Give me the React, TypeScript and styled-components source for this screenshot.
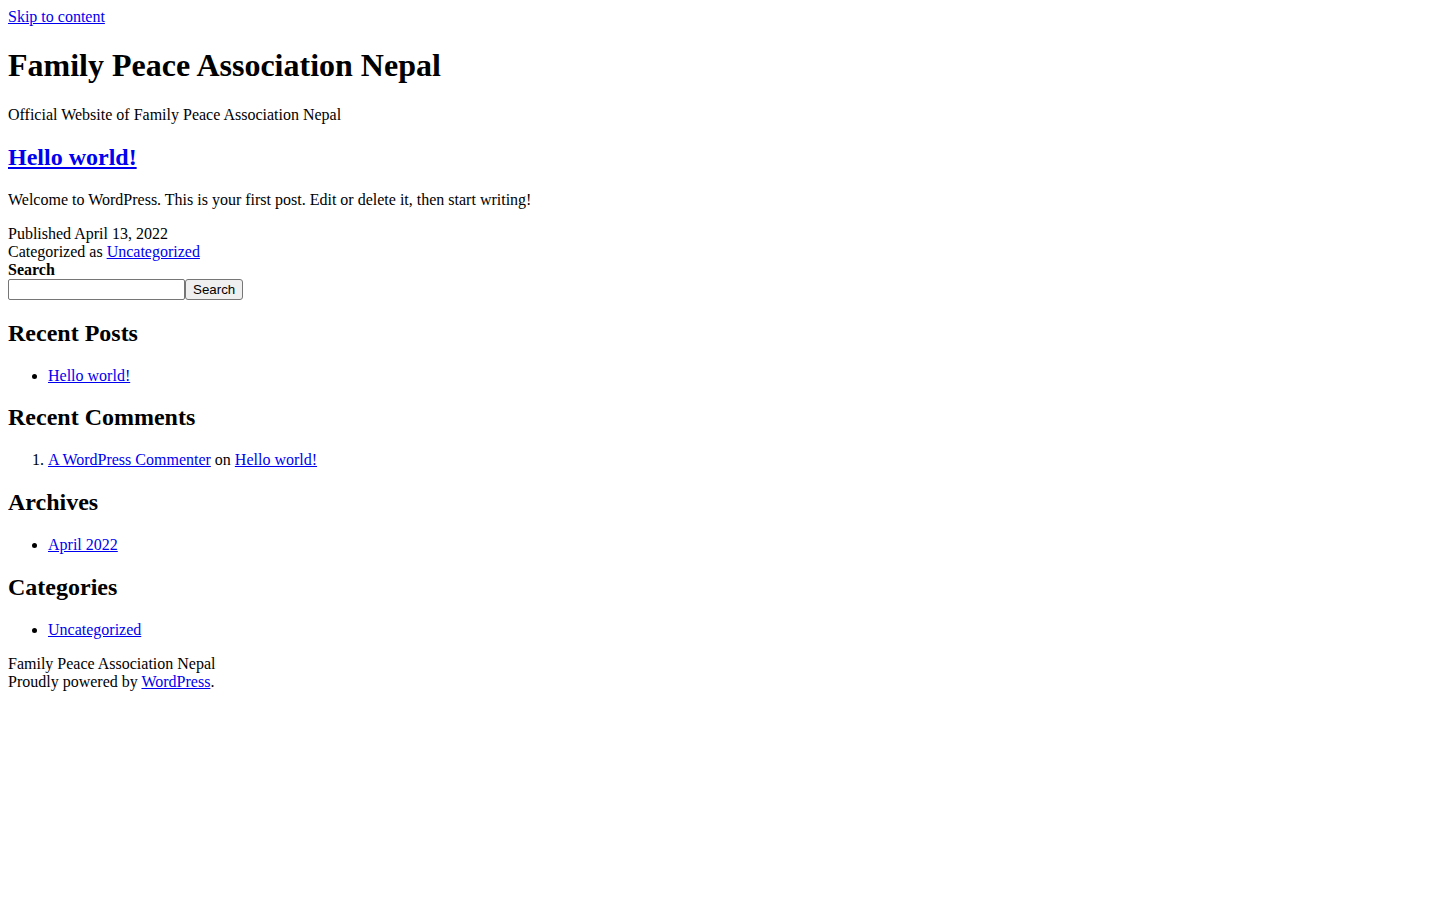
import React from "react";
import styled, { createGlobalStyle } from "styled-components";

const GlobalStyle = createGlobalStyle`
  body {
    margin: 8px;
    font-family: "Liberation Serif", "Times New Roman", serif;
    font-size: 16px;
    color: #000;
    background: #fff;
  }
  a {
    color: #0000ee;
  }
`;

export default function App() {
  return (
    <Page>
      <GlobalStyle />
      <SkipLink href="#content">Skip to content</SkipLink>
      <Header>
        <SiteTitle>Family Peace Association Nepal</SiteTitle>
        <Tagline>Official Website of Family Peace Association Nepal</Tagline>
      </Header>

      <Post id="content">
        <PostTitle>
          <a href="#">Hello world!</a>
        </PostTitle>
        <Text>Welcome to WordPress. This is your first post. Edit or delete it, then start writing!</Text>
        <Meta>
          <div>Published April 13, 2022</div>
          <div>
            Categorized as <a href="#">Uncategorized</a>
          </div>
        </Meta>
      </Post>

      <SearchForm onSubmit={(e) => e.preventDefault()}>
        <SearchLabel htmlFor="s">Search</SearchLabel>
        <SearchRow>
          <SearchInput id="s" type="search" />
          <SearchButton type="submit">Search</SearchButton>
        </SearchRow>
      </SearchForm>

      <WidgetTitle>Recent Posts</WidgetTitle>
      <List>
        <li>
          <a href="#">Hello world!</a>
        </li>
      </List>

      <WidgetTitle>Recent Comments</WidgetTitle>
      <Numbered>
        <li>
          <a href="#">A WordPress Commenter</a> on <a href="#">Hello world!</a>
        </li>
      </Numbered>

      <WidgetTitle>Archives</WidgetTitle>
      <List>
        <li>
          <a href="#">April 2022</a>
        </li>
      </List>

      <WidgetTitle>Categories</WidgetTitle>
      <List>
        <li>
          <a href="#">Uncategorized</a>
        </li>
      </List>

      <Footer>
        <div>Family Peace Association Nepal</div>
        <div>
          Proudly powered by <a href="#">WordPress</a>.
        </div>
      </Footer>
    </Page>
  );
}

const Page = styled.div`
  line-height: normal;
`;

const SkipLink = styled.a`
  display: inline-block;
`;

const Header = styled.header``;

const SiteTitle = styled.h1`
  font-size: 32px;
  font-weight: bold;
  margin: 21.44px 0;
`;

const Tagline = styled.p`
  margin: 16px 0;
`;

const Post = styled.article``;

const PostTitle = styled.h2`
  font-size: 24px;
  font-weight: bold;
  margin: 19.92px 0;
`;

const Text = styled.p`
  margin: 16px 0;
`;

const Meta = styled.footer``;

const SearchForm = styled.form``;

const SearchLabel = styled.label`
  display: block;
  font-weight: bold;
`;

const SearchRow = styled.div`
  display: flex;
  align-items: stretch;
`;

const SearchInput = styled.input`
  width: 177px;
  height: 21px;
  box-sizing: border-box;
  border: 1px solid #767676;
  border-radius: 2px;
  padding: 1px 2px;
  margin: 0;
  font: 13.33px "Liberation Sans", Arial, sans-serif;
`;

const SearchButton = styled.button`
  height: 21px;
  box-sizing: border-box;
  margin: 0;
  padding: 1px 7px;
  border: 1px solid #767676;
  border-radius: 3px;
  background: #efefef;
  color: #000;
  font: 13.33px "Liberation Sans", Arial, sans-serif;
`;

const WidgetTitle = styled.h2`
  font-size: 24px;
  font-weight: bold;
  margin: 19.92px 0;
`;

const List = styled.ul`
  margin: 16px 0;
  padding-left: 40px;
  list-style: disc;
`;

const Numbered = styled.ol`
  margin: 16px 0;
  padding-left: 40px;
`;

const Footer = styled.footer``;
